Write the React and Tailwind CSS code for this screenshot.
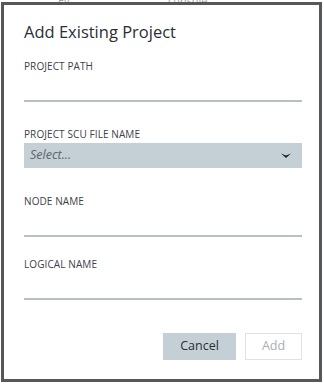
import React from 'react';

const Label = ({ children }) => (
  <div className="text-[10px] leading-[12px] text-[#3b4248] tracking-[0.1px]">{children}</div>
);

const Underline = () => <div className="h-[2px] bg-[#b8c0c6]" />;

export default function App() {
  return (
    <div className="w-[324px] h-[384px] bg-white relative overflow-hidden" style={{ fontFamily: '"Open Sans", "Liberation Sans", sans-serif' }}>
      {/* faint page text behind the dialog */}
      <div className="absolute top-[-7px] left-[58px] text-[11px] text-[#9aa0a4]">Ev</div>
      <div className="absolute top-[-7px] left-[168px] text-[11px] text-[#9aa0a4]">console</div>

      <div className="absolute left-[1px] top-[2px] w-[321px] h-[380px] border-[3px] border-[#555758] bg-white flex flex-col pl-[20px] pr-[17px]">
        <h2 className="mt-[15px] text-[16.5px] leading-[24px] text-[#2a2f33]">Add Existing Project</h2>

        <div className="mt-[16px]">
          <Label>PROJECT PATH</Label>
        </div>
        <div className="mt-[28px]">
          <Underline />
        </div>

        <div className="mt-[26px]">
          <Label>PROJECT SCU FILE NAME</Label>
        </div>
        <div className="mt-[3px] h-[25px] bg-[#c5cfd6] flex items-center justify-between pl-[6px] pr-[11px]">
          <span className="italic text-[12.5px] text-[#5b6369]">Select...</span>
          <svg width="10" height="6" viewBox="0 0 10 6">
            <path d="M0 0.5 L5 5 L10 0.5 L5 2.5 Z" fill="#1f2326" />
          </svg>
        </div>

        <div className="mt-[27px]">
          <Label>NODE NAME</Label>
        </div>
        <div className="mt-[28px]">
          <Underline />
        </div>

        <div className="mt-[21px]">
          <Label>LOGICAL NAME</Label>
        </div>
        <div className="mt-[28px]">
          <Underline />
        </div>

        <div className="mt-[33px] flex justify-end gap-[9px]">
          <button className="w-[73px] h-[27px] bg-[#c5cfd6] text-[12.5px] text-[#2a2f33]">Cancel</button>
          <button className="w-[57px] h-[27px] border border-[#dfe3e6] text-[12.5px] text-[#a9aeb2]">Add</button>
        </div>
      </div>
    </div>
  );
}
